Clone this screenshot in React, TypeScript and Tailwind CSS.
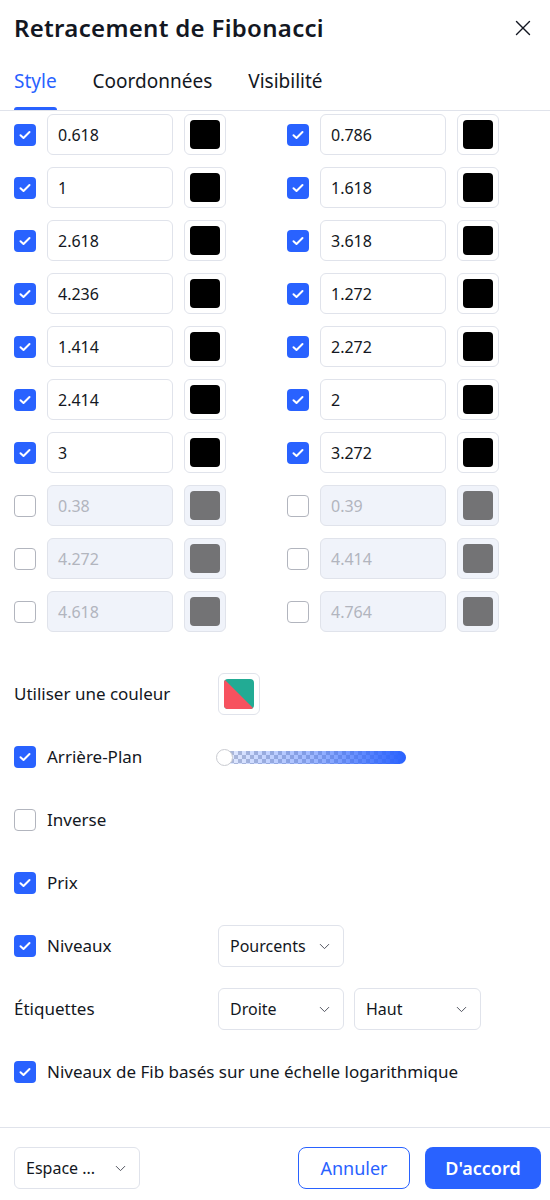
import { ChevronDown, X } from "lucide-react";

interface Level {
  value: string;
  on: boolean;
}

const left: Level[] = [
  { value: "0.618", on: true },
  { value: "1", on: true },
  { value: "2.618", on: true },
  { value: "4.236", on: true },
  { value: "1.414", on: true },
  { value: "2.414", on: true },
  { value: "3", on: true },
  { value: "0.38", on: false },
  { value: "4.272", on: false },
  { value: "4.618", on: false },
];

const right: Level[] = [
  { value: "0.786", on: true },
  { value: "1.618", on: true },
  { value: "3.618", on: true },
  { value: "1.272", on: true },
  { value: "2.272", on: true },
  { value: "2", on: true },
  { value: "3.272", on: true },
  { value: "0.39", on: false },
  { value: "4.414", on: false },
  { value: "4.764", on: false },
];

const Check = ({ on }: { on: boolean }) =>
  on ? (
    <span className="w-[22px] h-[22px] rounded-[4px] bg-[#2962ff] flex items-center justify-center flex-shrink-0">
      <svg width="12" height="10" viewBox="0 0 12 10" fill="none">
        <path d="M1.5 5.2 4.5 8 10.5 2" stroke="white" strokeWidth="2" strokeLinecap="round" strokeLinejoin="round" />
      </svg>
    </span>
  ) : (
    <span className="w-[22px] h-[22px] rounded-[4px] border border-[#b2b5be] bg-white flex-shrink-0" />
  );

const Swatch = ({ on }: { on: boolean }) => (
  <div
    className={`w-[42px] h-[41px] rounded-md border border-[#e0e3eb] flex items-center justify-center ${
      on ? "bg-white" : "bg-[#f0f3fa]"
    }`}
  >
    <div className={`w-[30px] h-[29px] rounded-[4px] ${on ? "bg-black" : "bg-[#737375]"}`} />
  </div>
);

const LevelCell = ({ level }: { level: Level }) => (
  <div className="flex items-center">
    <Check on={level.on} />
    <div
      className={`ml-[11px] w-[126px] h-[41px] rounded-md border border-[#e0e3eb] flex items-center pl-[10px] text-[16px] ${
        level.on ? "bg-white text-[#131722]" : "bg-[#f0f3fa] text-[#b2b5be]"
      }`}
    >
      {level.value}
    </div>
    <div className="ml-[11px]">
      <Swatch on={level.on} />
    </div>
  </div>
);

const Select = ({ label, width }: { label: string; width: string }) => (
  <div
    className={`${width} h-[42px] rounded-md border border-[#e0e3eb] flex items-center justify-between pl-[11px] pr-[10px] text-[16px] text-[#131722]`}
  >
    <span>{label}</span>
    <ChevronDown size={17} strokeWidth={1.4} className="text-[#50535e]" />
  </div>
);

const Row = ({ children }: { children: React.ReactNode }) => (
  <div className="h-[42px] flex items-center">{children}</div>
);

const CheckLabel = ({ label, on }: { label: string; on: boolean }) => (
  <div className="flex items-center w-[204px]">
    <Check on={on} />
    <span className="ml-[11px] text-[17px] text-[#131722] whitespace-nowrap">{label}</span>
  </div>
);

export default function App() {
  return (
    <div className="w-[550px] h-[1200px] bg-white flex flex-col font-['Noto_Sans',sans-serif] text-[#131722]">
      {/* Header */}
      <div className="h-[56px] flex items-center justify-between pl-[14px] pr-[14px]">
        <h1 className="text-[24px] font-semibold tracking-[0.3px]">Retracement de Fibonacci</h1>
        <X size={26} strokeWidth={1.3} className="text-[#131722]" />
      </div>

      {/* Tabs */}
      <div className="h-[55px] border-b border-[#e0e3eb] flex items-end pl-[14px] gap-[36px] text-[19px]">
        <div className="flex flex-col items-center">
          <span className="text-[#2962ff] leading-[24px]">Style</span>
          <div className="mt-[14px] h-[3px] w-full bg-[#2962ff] rounded-t-sm" />
        </div>
        <span className="leading-[24px] mb-[17px]">Coordonnées</span>
        <span className="leading-[24px] mb-[17px]">Visibilité</span>
      </div>

      {/* Levels */}
      <div className="pt-[3px] pl-[14px] flex flex-col gap-[12px]">
        {left.map((l, i) => (
          <div key={i} className="flex">
            <div className="w-[273px]">
              <LevelCell level={l} />
            </div>
            <LevelCell level={right[i]} />
          </div>
        ))}
      </div>

      {/* Options */}
      <div className="mt-[41px] pl-[14px] flex flex-col gap-[21px] text-[17px]">
        <Row>
          <span className="w-[204px]">Utiliser une couleur</span>
          <div className="w-[42px] h-[42px] rounded-md border border-[#e0e3eb] flex items-center justify-center">
            <svg width="30" height="30" viewBox="0 0 30 30">
              <defs>
                <clipPath id="sw">
                  <rect width="30" height="30" rx="4" />
                </clipPath>
              </defs>
              <g clipPath="url(#sw)">
                <rect width="30" height="30" fill="#22ab94" />
                <polygon points="0,0 30,30 0,30" fill="#f7525f" />
              </g>
            </svg>
          </div>
        </Row>
        <Row>
          <CheckLabel label="Arrière-Plan" on />
          <div className="relative w-[188px] h-[13px]">
            <div className="absolute inset-0 rounded-full overflow-hidden bg-[repeating-conic-gradient(#c2c7d3_0_25%,#ffffff_0_50%)] bg-[length:8px_8px]">
              <div className="w-full h-full bg-linear-to-r from-[#2962ff]/10 via-[#2962ff]/45 to-[#2962ff]" />
            </div>
            <div className="absolute left-[-2px] top-[-2px] w-[17px] h-[17px] rounded-full bg-white border border-[#c9cbd1]" />
          </div>
        </Row>
        <Row>
          <CheckLabel label="Inverse" on={false} />
        </Row>
        <Row>
          <CheckLabel label="Prix" on />
        </Row>
        <Row>
          <CheckLabel label="Niveaux" on />
          <Select label="Pourcents" width="w-[126px]" />
        </Row>
        <Row>
          <span className="w-[204px]">Étiquettes</span>
          <Select label="Droite" width="w-[126px]" />
          <div className="ml-[10px]">
            <Select label="Haut" width="w-[127px]" />
          </div>
        </Row>
        <Row>
          <CheckLabel label="Niveaux de Fib basés sur une échelle logarithmique" on />
        </Row>
      </div>

      {/* Footer */}
      <div className="mt-auto border-t border-[#e0e3eb] pt-[19px] pb-[11px] pr-[9px] pl-[14px] flex items-center justify-between">
        <Select label="Espace ..." width="w-[126px]" />
        <div className="flex items-center gap-[15px]">
          <button className="w-[112px] h-[42px] rounded-lg border border-[#2962ff] text-[#2962ff] text-[18px] bg-white">
            Annuler
          </button>
          <button className="w-[116px] h-[42px] rounded-lg bg-[#2962ff] text-white text-[18px] font-semibold">
            D'accord
          </button>
        </div>
      </div>
    </div>
  );
}
